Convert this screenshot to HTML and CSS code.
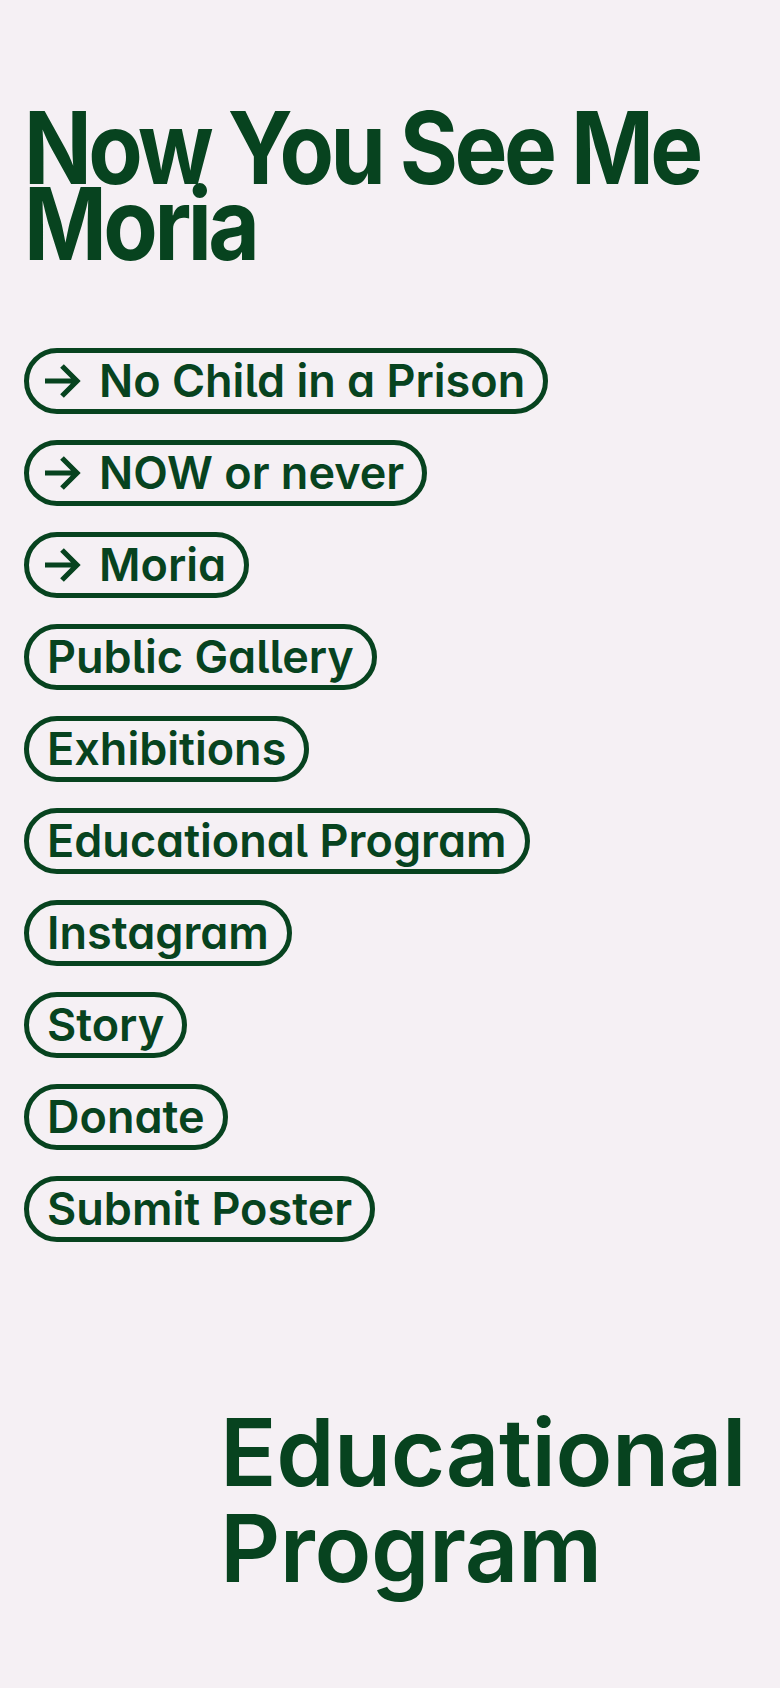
FILE: index.html
```html
<!DOCTYPE html>
<html lang="en">
<head>
    <meta charset="UTF-8">
    <meta name="viewport" content="width=device-width, initial-scale=1.0">
    <title>Now You See Me Moria</title>
    <link rel="stylesheet" href="styles.css">
</head>
<body>
    <main class="page">
        <h1 class="title">Now You See Me<br>Moria</h1>

        <nav class="links">
            <a class="pill pill-arrow" href="#">
                <svg class="arrow" viewBox="0 0 36 34" aria-hidden="true"><path d="M0 17H32M17 2L32 17L17 32"/></svg>
                No Child in a Prison
            </a>
            <a class="pill pill-arrow" href="#">
                <svg class="arrow" viewBox="0 0 36 34" aria-hidden="true"><path d="M0 17H32M17 2L32 17L17 32"/></svg>
                NOW or never
            </a>
            <a class="pill pill-arrow" href="#">
                <svg class="arrow" viewBox="0 0 36 34" aria-hidden="true"><path d="M0 17H32M17 2L32 17L17 32"/></svg>
                Moria
            </a>
            <a class="pill" href="#">Public Gallery</a>
            <a class="pill" href="#">Exhibitions</a>
            <a class="pill" href="#">Educational Program</a>
            <a class="pill" href="#">Instagram</a>
            <a class="pill" href="#">Story</a>
            <a class="pill" href="#">Donate</a>
            <a class="pill" href="#">Submit Poster</a>
        </nav>

        <h2 class="section-title">Educational<br>Program</h2>
    </main>
</body>
</html>
```

FILE: styles.css
```css
:root {
    --bg: #f5f0f4;
    --green: #07431f;
}

body {
    margin: 0;
    background: var(--bg);
    color: var(--green);
    font-family: Inter, "Liberation Sans", Arial, sans-serif;
}

.page {
    padding: 110px 24px 80px;
}

/* Big title, set condensed and tight */
.title {
    margin: 0;
    font-size: 100px;
    line-height: 76px;
    font-weight: 700;
    letter-spacing: -0.04em;
    white-space: nowrap;
    transform: scaleX(0.89);
    transform-origin: left top;
}

/* Pill links */
.links {
    margin-top: 86px;
    display: flex;
    flex-direction: column;
    align-items: flex-start;
    gap: 26px;
}

.pill {
    display: flex;
    align-items: center;
    gap: 18px;
    height: 56px;
    padding: 0 18px;
    border: 5px solid var(--green);
    border-radius: 33px;
    color: var(--green);
    text-decoration: none;
    font-size: 45px;
    line-height: 56px;
    font-weight: 600;
    letter-spacing: 0;
    font-feature-settings: "cv05", "cv11";
    white-space: nowrap;
}

.pill-arrow {
    padding-left: 16px;
}

.arrow {
    width: 36px;
    height: 34px;
    flex-shrink: 0;
    fill: none;
    stroke: var(--green);
    stroke-width: 5.2;
}

/* Section heading */
.section-title {
    margin: 162px 0 0 196px;
    font-size: 93.5px;
    line-height: 96px;
    font-weight: 600;
    letter-spacing: -0.005em;
}
```
